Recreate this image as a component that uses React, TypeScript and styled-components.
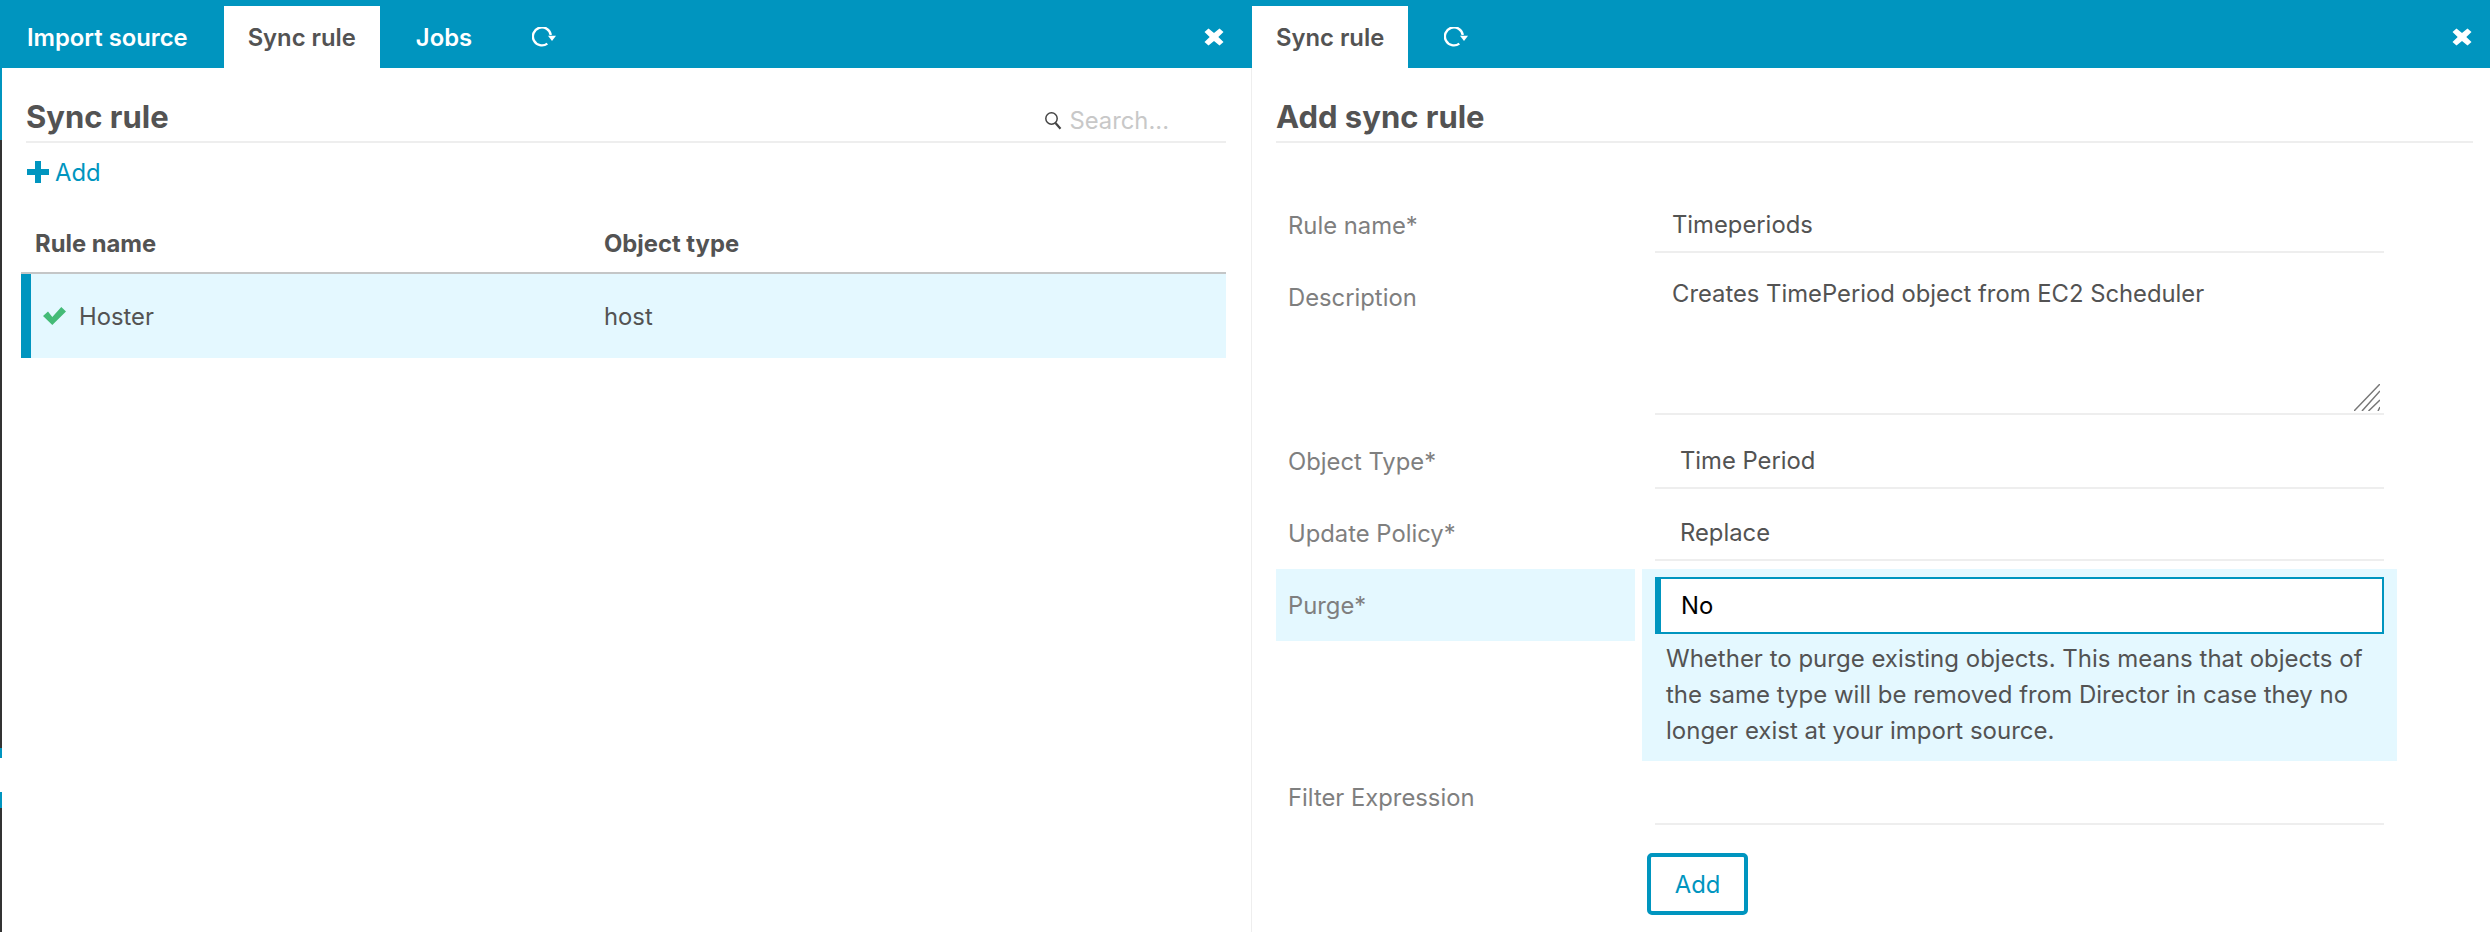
import React from 'react';
import styled, {createGlobalStyle} from 'styled-components';

const BLUE = '#0095bf';
const HIGHLIGHT = '#e4f8ff';

const GlobalStyle = createGlobalStyle`
  html, body {
    margin: 0;
    padding: 0;
    background: #fff;
  }
  * {
    box-sizing: border-box;
  }
  body {
    font-family: "Inter", "Liberation Sans", sans-serif;
    font-size: 23.8px;
    color: #535353;
  }
`

const Page = styled.div`
  display: flex;
  width: 2490px;
  height: 932px;
  overflow: hidden;
`

const Rail = styled.div`
  display: flex;
  flex-direction: column;
  flex: 0 0 2px;
`

const RailPiece = styled.div<{ $h: number; $c: string }>`
  flex: 0 0 ${p => p.$h}px;
  background: ${p => p.$c};
`

const Panel = styled.section<{ $w?: number }>`
  display: flex;
  flex-direction: column;
  flex: ${p => (p.$w ? `0 0 ${p.$w}px` : '1')};
`

const TabBar = styled.nav<{ $inset: number; $end: number }>`
  display: flex;
  align-items: flex-end;
  flex: 0 0 68px;
  padding-left: ${p => p.$inset}px;
  padding-right: ${p => p.$end}px;
  background: ${BLUE};
`

const Tab = styled.div<{ $active?: boolean }>`
  display: flex;
  align-items: center;
  height: 62px;
  margin-right: 12px;
  padding: 0 24px;
  font-weight: 600;
  color: ${p => (p.$active ? '#535353' : '#fff')};
  background: ${p => (p.$active ? '#fff' : 'transparent')};
`

const CloseBtn = styled.div`
  display: flex;
  align-items: center;
  height: 62px;
  margin-left: auto;
`

const Body = styled.div<{ $bordered?: boolean }>`
  flex: 1;
  padding: 0 ${p => (p.$bordered ? 25 : 17)}px 0 ${p => (p.$bordered ? 19 : 24)}px;
  border-right: ${p => (p.$bordered ? '1px solid #eee' : '0')};
`

const TitleRow = styled.div`
  display: flex;
  align-items: flex-end;
  justify-content: space-between;
  height: 75px;
  padding: 0 57px 6px 0;
  border-bottom: 2px solid #eee;
`

const Title = styled.h1`
  margin: 0;
  font-size: 31px;
  font-weight: 700;
  color: #535353;
`

const LeftTitle = styled(TitleRow)`
  margin-left: 5px;
`

const Search = styled.div`
  display: flex;
  align-items: center;
  gap: 7px;
  color: #c8c8c8;
`

const AddLink = styled.div`
  display: flex;
  align-items: center;
  gap: 6px;
  height: 44px;
  margin: 7px 0 0 6px;
  color: ${BLUE};
`

const Table = styled.table`
  width: 100%;
  margin-top: 20px;
  border-collapse: separate;
  border-spacing: 0;
  table-layout: fixed;
`

const Th = styled.th`
  height: 60px;
  padding: 0 0 0 14px;
  text-align: left;
  font-weight: 700;
  color: #535353;
  border-bottom: 2px solid #c4c6c7;
`

const Td = styled.td`
  height: 84px;
  padding: 0 0 0 14px;
  background: ${HIGHLIGHT};
  color: #535353;
`

const FirstTd = styled(Td)`
  padding-left: 12px;
  border-left: 10px solid ${BLUE};
`

const RuleName = styled.span`
  display: flex;
  align-items: center;
  gap: 13px;
`

const Form = styled.div`
  display: flex;
  flex-direction: column;
  margin-top: 46px;
  width: 1121px;
`

const FormRow = styled.div`
  display: grid;
  grid-template-columns: 359px 755px;
  column-gap: 7px;
  align-items: start;
`

const Label = styled.label<{ $active?: boolean }>`
  display: flex;
  align-items: center;
  height: 72px;
  padding-left: 12px;
  color: #7f7f7f;
  background: ${p => (p.$active ? HIGHLIGHT : 'transparent')};
`

const FieldCell = styled.div<{ $active?: boolean }>`
  padding: 8px 13px;
  background: ${p => (p.$active ? HIGHLIGHT : 'transparent')};
`

const Field = styled.div<{ $select?: boolean }>`
  display: flex;
  align-items: center;
  height: 56px;
  padding-left: ${p => (p.$select ? 25 : 17)}px;
  color: #535353;
  border-bottom: 2px solid #eee;
`

const TextArea = styled(Field)`
  position: relative;
  align-items: flex-start;
  height: 146px;
  margin-bottom: 2px;
  padding-top: 10px;
`

const Grip = styled.svg`
  position: absolute;
  right: 4px;
  bottom: 2px;
`

const FocusedSelect = styled.div`
  display: flex;
  align-items: center;
  height: 57px;
  padding-left: 20px;
  color: #000;
  background: #fff;
  border: 2px solid ${BLUE};
  border-left-width: 6px;
`

const Help = styled.p`
  margin: 7px -13px 4px;
  padding: 0 24px;
  font-size: 24px;
  line-height: 36px;
  color: #535353;
`

const SubmitRow = styled.div`
  margin: 20px 0 0 371px;
`

const Submit = styled.button`
  width: 101px;
  height: 62px;
  padding: 0;
  font-family: inherit;
  font-size: 23.8px;
  color: ${BLUE};
  background: #fff;
  border: 4px solid ${BLUE};
  border-radius: 5px;
`

const Refresh = () => (
    <svg width="24" height="20" viewBox="0 0 24 20">
        <path d="M18.8 8A9 9 0 1 0 15.3 16.6" fill="none" stroke="#fff" strokeWidth="2.4"/>
        <path d="M16 8.7h8L20 14z" fill="#fff"/>
    </svg>
)

const Close = () => (
    <svg width="20" height="18" viewBox="0 0 20 18">
        <path d="M0.5 4 4.5 0.5 10 5 15.5 0.5 19.5 4 14.3 9 19.5 14 15.5 17.5 10 13 4.5 17.5 0.5 14 5.7 9z" fill="#fff"/>
    </svg>
)

const SearchIcon = () => (
    <svg width="18" height="19" viewBox="0 0 18 19">
        <circle cx="7.5" cy="7.5" r="5.7" fill="none" stroke="#444" strokeWidth="1.5"/>
        <path d="M11.5 12 16.5 17.8" stroke="#444" strokeWidth="2.2"/>
    </svg>
)

const Plus = () => (
    <svg width="22" height="22" viewBox="0 0 22 22">
        <path d="M8 0h6v8h8v6h-8v8H8v-8H0V8h8z" fill={BLUE}/>
    </svg>
)

const Check = () => (
    <svg width="23" height="18" viewBox="0 0 23 18">
        <path d="M0 9 5 4.6 9.3 10 18.3 0 23 4.6 9.3 18z" fill="#44bb77"/>
    </svg>
)

const App = () => {
    return (
        <>
            <GlobalStyle/>
            <Page>
                <Rail>
                    <RailPiece $h={140} $c={BLUE}/>
                    <RailPiece $h={608} $c="#333"/>
                    <RailPiece $h={10} $c={BLUE}/>
                    <RailPiece $h={34} $c="#fff"/>
                    <RailPiece $h={16} $c={BLUE}/>
                    <RailPiece $h={124} $c="#333"/>
                </Rail>
                <Panel $w={1250}>
                    <TabBar $inset={1} $end={28}>
                        <Tab>Import source</Tab>
                        <Tab $active>Sync rule</Tab>
                        <Tab>Jobs</Tab>
                        <Tab><Refresh/></Tab>
                        <CloseBtn><Close/></CloseBtn>
                    </TabBar>
                    <Body $bordered>
                        <LeftTitle>
                            <Title>Sync rule</Title>
                            <Search><SearchIcon/>Search...</Search>
                        </LeftTitle>
                        <AddLink><Plus/>Add</AddLink>
                        <Table>
                            <colgroup>
                                <col width="569"/>
                                <col/>
                            </colgroup>
                            <thead>
                            <tr>
                                <Th>Rule name</Th>
                                <Th>Object type</Th>
                            </tr>
                            </thead>
                            <tbody>
                            <tr>
                                <FirstTd><RuleName><Check/>Hoster</RuleName></FirstTd>
                                <Td>host</Td>
                            </tr>
                            </tbody>
                        </Table>
                    </Body>
                </Panel>
                <Panel>
                    <TabBar $inset={0} $end={18}>
                        <Tab $active>Sync rule</Tab>
                        <Tab><Refresh/></Tab>
                        <CloseBtn><Close/></CloseBtn>
                    </TabBar>
                    <Body>
                        <TitleRow><Title>Add sync rule</Title></TitleRow>
                        <Form>
                            <FormRow>
                                <Label>Rule name*</Label>
                                <FieldCell><Field>Timeperiods</Field></FieldCell>
                            </FormRow>
                            <FormRow>
                                <Label>Description</Label>
                                <FieldCell>
                                    <TextArea>
                                        Creates TimePeriod object from EC2 Scheduler
                                        <Grip width="26" height="27" viewBox="0 0 26 27">
                                            <path d="M0 27 26 0M8 27 26 7M14.5 27 26 16M24 27 26 23" stroke="#777" strokeWidth="1.5" fill="none"/>
                                        </Grip>
                                    </TextArea>
                                </FieldCell>
                            </FormRow>
                            <FormRow>
                                <Label>Object Type*</Label>
                                <FieldCell><Field $select>Time Period</Field></FieldCell>
                            </FormRow>
                            <FormRow>
                                <Label>Update Policy*</Label>
                                <FieldCell><Field $select>Replace</Field></FieldCell>
                            </FormRow>
                            <FormRow>
                                <Label $active>Purge*</Label>
                                <FieldCell $active>
                                    <FocusedSelect>No</FocusedSelect>
                                    <Help>
                                        Whether to purge existing objects. This means that objects of the same type
                                        will be removed from Director in case they no longer exist at your import source.
                                    </Help>
                                </FieldCell>
                            </FormRow>
                            <FormRow>
                                <Label>Filter Expression</Label>
                                <FieldCell><Field/></FieldCell>
                            </FormRow>
                            <SubmitRow><Submit>Add</Submit></SubmitRow>
                        </Form>
                    </Body>
                </Panel>
            </Page>
        </>
    );
};

export default App;
